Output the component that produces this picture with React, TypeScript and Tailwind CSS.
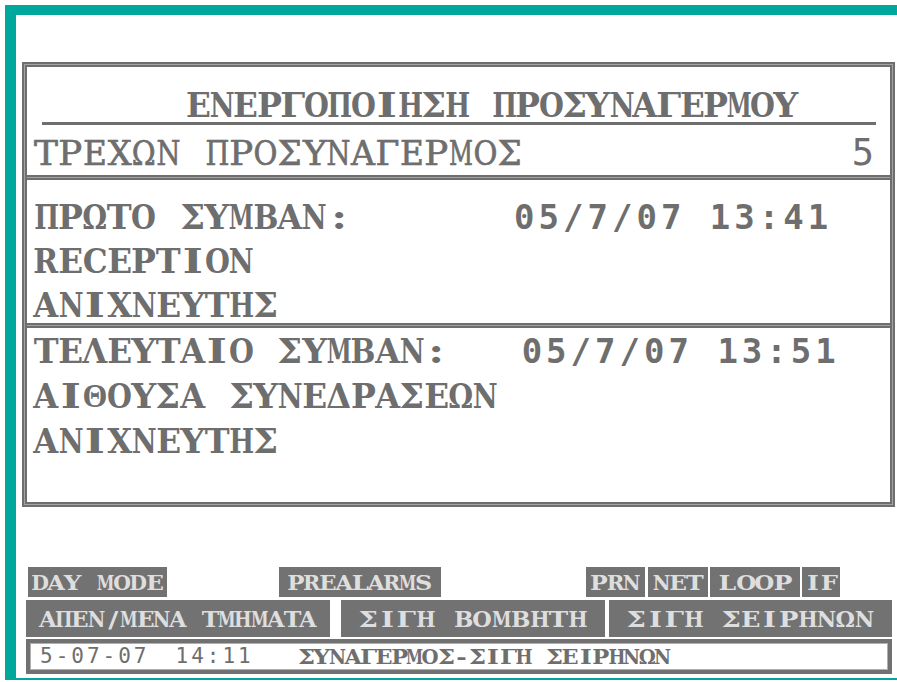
import React from "react";

// Canvas used to read the advance of each glyph so it can be fitted to its cell.
const measureCtx: CanvasRenderingContext2D | null =
  typeof document !== "undefined" ? document.createElement("canvas").getContext("2d") : null;

function glyphScale(ch: string, font: string, target: number, cap: number) {
  if (!measureCtx || ch === " ") return 1;
  measureCtx.font = font;
  const w = measureCtx.measureText(ch).width;
  if (!w) return 1;
  return Math.min(cap, target / w);
}

// Fixed-pitch text: every character sits centred in a cell of equal width,
// with each serif glyph stretched or narrowed to fill the cell evenly.
// Theta is taken from Liberation Serif, whose capital has the full-height bowl.
function Cells({
  text,
  cell,
  cellW,
  size,
  bold,
  fit,
  cap = 1.3,
}: {
  text: string;
  cell: string;
  cellW: number;
  size: number;
  bold: boolean;
  fit: number;
  cap?: number;
}) {
  const weight = bold ? "bold" : "normal";
  return (
    <span className="inline-flex">
      {Array.from(text).map((c, i) => {
        const theta = c === "Θ";
        const font = `${weight} ${size}px ${theta ? '"Liberation Serif"' : '"DejaVu Serif"'}`;
        return (
          <span key={i} className={"inline-flex shrink-0 justify-center " + cell}>
            <span
              className={theta ? "font-['Liberation_Serif',serif]" : ""}
              style={{ transform: `scaleX(${glyphScale(c, font, cellW * fit, cap)})` }}
            >
              {c === " " ? "\u00a0" : c}
            </span>
          </span>
        );
      })}
    </span>
  );
}

function Tag({ text, box, cell, cellW }: { text: string; box: string; cell: string; cellW: number }) {
  return (
    <div className={"flex items-center justify-center bg-[#727272] text-[#dedede] font-bold text-[21px] leading-none " + box}>
      <Cells text={text} cell={cell} cellW={cellW} size={21} bold fit={1.08} cap={1.2} />
    </div>
  );
}

function Key({ text, box, cell, cellW }: { text: string; box: string; cell: string; cellW: number }) {
  return (
    <div className={"flex items-center justify-center bg-[#727272] text-[#dedede] font-bold text-[23px] leading-none " + box}>
      <Cells text={text} cell={cell} cellW={cellW} size={23} bold fit={1.08} cap={1.2} />
    </div>
  );
}

function Divider() {
  return <div className="h-[5px] shrink-0 border-y-2 border-[#6e6e6e] bg-[#a3a3a3]" />;
}

function Line({ text }: { text: string }) {
  return <Cells text={text} cell="w-[24.4px]" cellW={24.4} size={33} bold fit={1.02} />;
}

export default function App() {
  return (
    <div className="w-[897px] h-[682px] overflow-hidden bg-white pl-[5px] pt-[5px] font-['DejaVu_Serif',serif] text-[#6e6e6e]">
      <div className="flex h-[675px] flex-col border-t-[10px] border-l-[11px] border-b-2 border-[#00a89c]">
        {/* alarm panel */}
        <div className="ml-[6px] mt-[47px] w-[873px] border-2 border-[#6e6e6e] bg-[#a3a3a3] p-px">
          <div className="flex flex-col border-2 border-[#6e6e6e] bg-white">
            <div className="flex h-[108px] flex-col">
              <div className="ml-[15px] mr-[14px] mt-[23px] border-b-[3px] border-[#6e6e6e] pl-[145px] text-[33px] font-bold leading-[32px]">
                <Cells text="ΕΝΕΡΓΟΠΟΙΗΣΗ ΠΡΟΣΥΝΑΓΕΡΜΟΥ" cell="w-[23.5px]" cellW={23.5} size={33} bold fit={1.06} />
              </div>
              <div className="mt-[8px] flex items-baseline justify-between pl-[7px] pr-[16px] leading-[40px]">
                <span className="text-[33px] [-webkit-text-stroke:0.7px_#6e6e6e]">
                  <Cells text="ΤΡΕΧΩΝ ΠΡΟΣΥΝΑΓΕΡΜΟΣ" cell="w-[24.4px]" cellW={24.4} size={33} bold={false} fit={0.98} />
                </span>
                <span className="font-['DejaVu_Sans_Mono',monospace] text-[37px]">5</span>
              </div>
            </div>
            <Divider />
            <div className="h-[143px] pl-[7px] pt-[15px] text-[33px] font-bold leading-[44px]">
              <div className="flex items-baseline">
                <Line text="ΠΡΩΤΟ ΣΥΜΒΑΝ:" />
                <span className="ml-[163px] font-['DejaVu_Sans_Mono',monospace] text-[34px] tracking-[4px]">05/7/07 13:41</span>
              </div>
              <div>
                <Line text="RECEPTION" />
              </div>
              <div>
                <Line text="ΑΝΙΧΝΕΥΤΗΣ" />
              </div>
            </div>
            <Divider />
            <div className="h-[174px] pl-[7px] pt-px text-[33px] font-bold leading-[45px]">
              <div className="flex items-baseline">
                <Line text="ΤΕΛΕΥΤΑΙΟ ΣΥΜΒΑΝ:" />
                <span className="ml-[73px] font-['DejaVu_Sans_Mono',monospace] text-[34px] tracking-[4px]">05/7/07 13:51</span>
              </div>
              <div>
                <Line text="ΑΙΘΟΥΣΑ ΣΥΝΕΔΡΑΣΕΩΝ" />
              </div>
              <div>
                <Line text="ΑΝΙΧΝΕΥΤΗΣ" />
              </div>
            </div>
          </div>
        </div>

        {/* status indicators, keys and message line */}
        <div className="ml-[10px] mt-[60px] flex w-[866px] flex-col">
          <div className="ml-[2px] flex h-[30px]">
            <Tag text="DAY MODE" box="w-[139px]" cell="w-[16.4px]" cellW={16.4} />
            <Tag text="PREALARMS" box="ml-[112px] w-[162px]" cell="w-[16px]" cellW={16} />
            <Tag text="PRN" box="ml-[145px] w-[59px]" cell="w-[16.4px]" cellW={16.4} />
            <Tag text="NET" box="ml-[3px] w-[60px]" cell="w-[16.4px]" cellW={16.4} />
            <Tag text="LOOP" box="ml-[2px] w-[90px]" cell="w-[18.5px]" cellW={18.5} />
            <Tag text="IF" box="ml-[2px] w-[38px]" cell="w-[16px]" cellW={16} />
          </div>
          <div className="mt-[3px] flex h-[37px]">
            <Key text="ΑΠΕΝ/ΜΕΝΑ ΤΜΗΜΑΤΑ" box="w-[304px]" cell="w-[16.3px]" cellW={16.3} />
            <Key text="ΣΙΓΗ ΒΟΜΒΗΤΗ" box="ml-[11px] w-[264px]" cell="w-[19px]" cellW={18} />
            <Key text="ΣΙΓΗ ΣΕΙΡΗΝΩΝ" box="ml-[4px] w-[283px]" cell="w-[19px]" cellW={18} />
          </div>
          <div className="mt-[2px] h-[35px] border-4 border-[#717171]">
            <div className="flex h-full items-center border border-[#b0b0b0] bg-white pl-[9px] leading-none">
              <span className="font-['DejaVu_Sans_Mono',monospace] text-[21px] tracking-[3px]">5-07-07</span>
              <span className="ml-[26px] font-['DejaVu_Sans_Mono',monospace] text-[21px] tracking-[3px]">14:11</span>
              <span className="ml-[45px] text-[21px] font-bold">
                <Cells text="ΣΥΝΑΓΕΡΜΟΣ-ΣΙΓΗ ΣΕΙΡΗΝΩΝ" cell="w-[15.5px]" cellW={15.5} size={21} bold fit={1.1} cap={1.2} />
              </span>
            </div>
          </div>
        </div>
      </div>
    </div>
  );
}
